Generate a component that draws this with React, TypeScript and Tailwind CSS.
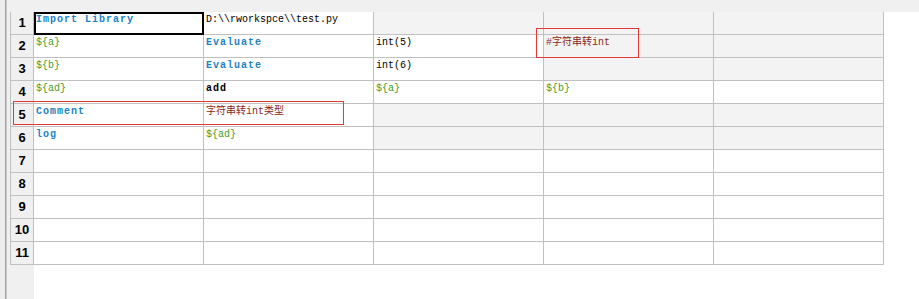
import React from 'react';

type Kind = 'kw' | 'var' | 'plain' | 'bold' | 'comment';

interface Cell {
  text?: string;
  kind?: Kind;
  gray?: boolean;
}

const kindClass: Record<Kind, string> = {
  kw: 'font-bold tracking-[1px] text-[#1b82c6]',
  var: 'text-[#3f9a2a]',
  plain: 'text-black',
  bold: 'font-bold tracking-[1px] text-black',
  comment: 'text-[#8a1f1f]',
};

const G: Cell = { gray: true };
const E: Cell = {};

const rows: Cell[][] = [
  [{ text: 'Import Library', kind: 'kw' }, { text: 'D:\\\\rworkspce\\\\test.py', kind: 'plain' }, G, G, G],
  [{ text: '${a}', kind: 'var' }, { text: 'Evaluate', kind: 'kw' }, { text: 'int(5)', kind: 'plain' }, { text: '#字符串转int', kind: 'comment', gray: true }, G],
  [{ text: '${b}', kind: 'var' }, { text: 'Evaluate', kind: 'kw' }, { text: 'int(6)', kind: 'plain' }, G, G],
  [{ text: '${ad}', kind: 'var' }, { text: 'add', kind: 'bold' }, { text: '${a}', kind: 'var' }, { text: '${b}', kind: 'var' }, E],
  [{ text: 'Comment', kind: 'kw' }, { text: '字符串转int类型', kind: 'comment' }, G, G, G],
  [{ text: 'log', kind: 'kw' }, { text: '${ad}', kind: 'var' }, G, G, G],
  [E, E, E, E, E],
  [E, E, E, E, E],
  [E, E, E, E, E],
  [E, E, E, E, E],
  [E, E, E, E, E],
];

export default function App() {
  return (
    <div className="relative flex h-screen w-full overflow-hidden bg-white font-['Liberation_Mono','Noto_Sans_CJK_SC',monospace] text-[10px]">
      {/* left splitter strip */}
      <div className="flex h-full w-[10px] shrink-0">
        <div className="w-[5px] bg-[#ececec]" />
        <div className="w-px bg-[#a3a3a3]" />
        <div className="w-px bg-[#c9c9c9]" />
        <div className="w-[3px] bg-[#f0f0f0]" />
      </div>

      <div className="flex min-w-0 flex-1 flex-col">
        <div className="h-[12px] shrink-0 bg-[#f0f0f0]" />

        <div className="w-fit border-l border-[#c0c0c0]">
          {rows.map((row, ri) => (
            <div key={ri} className="flex h-[23px]">
              <div className="flex w-[23px] shrink-0 items-center justify-center border-r border-b border-[#c0c0c0] bg-[#f0f0f0] font-['Liberation_Sans',sans-serif] text-[13px] font-bold text-black">
                {ri + 1}
              </div>
              {row.map((cell, ci) => (
                <div
                  key={ci}
                  className={`relative w-[170px] shrink-0 border-r border-b border-[#c0c0c0] pl-[2px] pt-[2px] leading-[12px] whitespace-nowrap ${cell.gray ? 'bg-[#f3f3f3]' : 'bg-white'}`}
                >
                  {cell.text && <span className={kindClass[cell.kind ?? 'plain']}>{cell.text}</span>}
                  {ri === 0 && ci === 0 && (
                    <div className="pointer-events-none absolute top-0 left-0 -right-px -bottom-px border-2 border-black" />
                  )}
                </div>
              ))}
            </div>
          ))}
        </div>

        <div className="flex-1">
          <div className="h-full w-[24px] bg-[#f0f0f0]" />
        </div>
      </div>

      {/* red annotation boxes */}
      <div className="pointer-events-none absolute top-[28px] left-[536px] h-[30px] w-[103px] border border-[#e53935]" />
      <div className="pointer-events-none absolute top-[101px] left-[13px] h-[24px] w-[331px] border border-[#e53935]" />
    </div>
  );
}
